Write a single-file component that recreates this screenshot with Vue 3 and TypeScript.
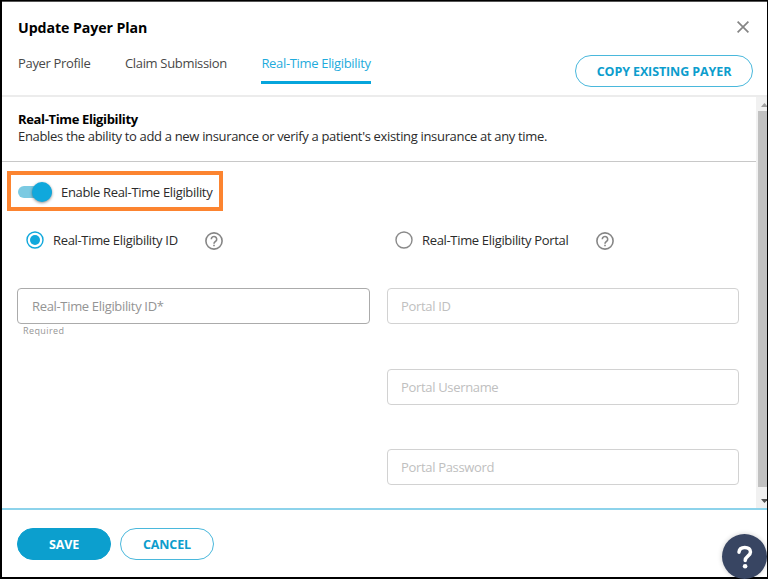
<script setup lang="ts">
import { ref } from 'vue'

const tabs: string[] = ['Payer Profile', 'Claim Submission', 'Real-Time Eligibility']
const activeTab = ref<number>(2)
const enabled = ref<boolean>(true)
const mode = ref<'id' | 'portal'>('id')
const portalFields: string[] = ['Portal ID', 'Portal Username', 'Portal Password']
</script>

<template>
  <div class="dialog">
    <header class="header">
      <div class="title-row">
        <h1 class="title">Update Payer Plan</h1>
        <button class="close" aria-label="Close">
          <svg width="12" height="12" viewBox="0 0 12 12"><path d="M.6 .6 11.4 11.4M11.4 .6 .6 11.4" fill="none" stroke="#858585" stroke-width="1.7" /></svg>
        </button>
      </div>
      <div class="nav-row">
        <nav class="tabs">
          <a v-for="(tab, i) in tabs" :key="tab" class="tab" :class="{ active: i === activeTab }" @click="activeTab = i">{{ tab }}</a>
        </nav>
        <button class="pill copy">COPY EXISTING PAYER</button>
      </div>
    </header>

    <div class="body">
      <main class="content">
        <section class="intro">
          <h2 class="intro-title">Real-Time Eligibility</h2>
          <p class="intro-text">Enables the ability to add a new insurance or verify a patient's existing insurance at any time.</p>
        </section>
        <section class="form">
          <div class="highlight" @click="enabled = !enabled">
            <span class="switch" :class="{ on: enabled }"><span class="knob"></span></span>
            <span class="switch-label">Enable Real-Time Eligibility</span>
          </div>
          <div class="columns">
            <div class="column">
              <div class="option option-id">
                <svg class="radio" :class="{ checked: mode === 'id' }" width="18" height="18" viewBox="0 0 18 18" @click="mode = 'id'"><circle class="ring" cx="9" cy="9" r="8" /><circle v-if="mode === 'id'" class="dot" cx="9" cy="9" r="5" /></svg>
                <span class="option-label">Real-Time Eligibility ID</span>
                <svg class="help" width="18" height="18" viewBox="0 0 18 18"><circle cx="9" cy="9" r="8.1" /><path d="M6.3 7.2a2.7 2.7 0 1 1 4.5 2c-1 .9-1.8 1.2-1.8 2.5" /><path d="M9 12.8v1.5" /></svg>
              </div>
              <div class="field required">Real-Time Eligibility ID*</div>
              <div class="hint">Required</div>
            </div>
            <div class="column">
              <div class="option option-portal">
                <svg class="radio" :class="{ checked: mode === 'portal' }" width="18" height="18" viewBox="0 0 18 18" @click="mode = 'portal'"><circle class="ring" cx="9" cy="9" r="8" /><circle v-if="mode === 'portal'" class="dot" cx="9" cy="9" r="5" /></svg>
                <span class="option-label">Real-Time Eligibility Portal</span>
                <svg class="help" width="18" height="18" viewBox="0 0 18 18"><circle cx="9" cy="9" r="8.1" /><path d="M6.3 7.2a2.7 2.7 0 1 1 4.5 2c-1 .9-1.8 1.2-1.8 2.5" /><path d="M9 12.8v1.5" /></svg>
              </div>
              <div v-for="field in portalFields" :key="field" class="field">{{ field }}</div>
            </div>
          </div>
        </section>
      </main>
      <div class="scrollbar">
        <svg class="arrow-up" width="7" height="4" viewBox="0 0 7 4"><path d="M0 4 3.5 0 7 4z" fill="#a0a0a0" /></svg>
        <div class="thumb"></div>
        <svg class="arrow-down" width="7" height="4" viewBox="0 0 7 4"><path d="M0 0 3.5 4 7 0z" fill="#505050" /></svg>
      </div>
    </div>

    <footer class="footer">
      <button class="pill save">SAVE</button>
      <button class="pill cancel">CANCEL</button>
    </footer>

    <button class="fab" aria-label="Help">
      <svg width="18" height="24" viewBox="0 0 18 24"><path d="M3 7.2C3.3 4.2 5.6 2.4 8.8 2.4c3.5 0 5.7 1.8 5.7 4.6 0 4-5.3 4.2-5.3 8.4" fill="none" stroke="#fff" stroke-width="3.5" stroke-linecap="round" /><circle cx="9.1" cy="21.3" r="2.3" fill="#fff" /></svg>
    </button>
  </div>
</template>

<style>
body {
  margin: 0;
  background: #000;
}
</style>

<style scoped>
.dialog {
  position: relative;
  box-sizing: border-box;
  width: 768px;
  height: 579px;
  padding: 1px 1px 2px 2px;
  display: flex;
  flex-direction: column;
  overflow: hidden;
  background: #000;
  color: #2b2b2b;
  font-family: "Open Sans", sans-serif;
  font-size: 13px;
  letter-spacing: -.33px;
}
h1, h2, p { margin: 0; }
button { font-family: inherit; padding: 0; cursor: pointer; }
.header {
  box-sizing: border-box;
  height: 96px;
  flex: none;
  padding: 0 14px 0 16px;
  border-top: 1px solid #555;
  border-bottom: 2px solid #ececec;
  background: #fff;
}
.title-row {
  display: flex;
  justify-content: space-between;
  height: 50px;
}
.title {
  padding-top: 16px;
  font-size: 14.2px;
  line-height: 20px;
  font-weight: 700;
  letter-spacing: -.08px;
  color: #000;
}
.close {
  width: 12px;
  height: 12px;
  margin: 19px 4px 0 0;
  border: 0;
  background: none;
}
.close svg { display: block; }
.nav-row {
  display: flex;
  justify-content: space-between;
}
.tabs {
  display: flex;
  gap: 34.5px;
}
.tab {
  box-sizing: border-box;
  height: 32px;
  padding-top: 1px;
  line-height: 20px;
  color: #484848;
  white-space: nowrap;
}
.tab.active {
  color: #1fabdc;
  border-bottom: 3px solid #06a5dc;
}
.pill {
  box-sizing: border-box;
  height: 32px;
  border: 1px solid #4ab8dc;
  border-radius: 16px;
  background: #fff;
  color: #0c9dcd;
  font-size: 12.5px;
  font-weight: 700;
  letter-spacing: -.1px;
}
.copy {
  width: 178px;
  height: 32px;
  margin-top: 3px;
  padding-top: 1px;
}
.body {
  display: flex;
  height: 411px;
  flex: none;
  background: #fff;
}
.content { width: 754px; }
.intro {
  box-sizing: border-box;
  height: 65px;
  padding: 14px 16px 0;
  border-bottom: 1px solid #c8c8c8;
}
.intro-title {
  font-size: 13px;
  line-height: 17px;
  font-weight: 700;
  letter-spacing: -.36px;
  color: #000;
}
.intro-text { line-height: 17px; white-space: nowrap; }
.form { padding: 9px 17px 0 5px; }
.highlight {
  box-sizing: border-box;
  display: flex;
  align-items: center;
  width: 216px;
  height: 40px;
  padding-left: 7px;
  border: 4px solid #fc8430;
}
.switch {
  display: flex;
  align-items: center;
  flex: none;
  width: 34px;
  height: 12px;
  margin-top: 2px;
  border-radius: 6px;
  background: #bbb;
}
.switch.on {
  justify-content: flex-end;
  background: #7bcae2;
}
.knob {
  width: 20px;
  height: 20px;
  border-radius: 50%;
  background: #10a8dc;
  box-shadow: 0 1px 3px rgba(0, 0, 0, .45);
}
.switch-label {
  margin-left: 9px;
  padding-top: 1px;
  white-space: nowrap;
}
.columns {
  display: grid;
  grid-template-columns: 353px 352px;
  gap: 17px;
  padding-left: 10px;
}
.option {
  display: flex;
  align-items: center;
  height: 57px;
  margin-bottom: 20px;
}
.option-id { padding-left: 9.3px; }
.option-portal { padding-left: 8.3px; }
.radio .ring {
  fill: none;
  stroke: #8a8a8a;
  stroke-width: 1.4;
}
.radio.checked .ring { stroke: #10a8dc; }
.radio .dot { fill: #10a8dc; }
.option-label { margin-left: 8.7px; }
.help {
  margin: 3px 0 0 27.7px;
  fill: none;
  stroke: #868686;
  stroke-width: 1.6;
}
.field {
  box-sizing: border-box;
  height: 36px;
  margin-bottom: 44.6px;
  padding-left: 13px;
  border: 1px solid #d2d2d2;
  border-radius: 4px;
  line-height: 34px;
  color: #c0c0c0;
}
.field.required {
  margin-bottom: 0;
  padding-left: 14px;
  border-color: #ababab;
  color: #949494;
}
.hint {
  padding-left: 6px;
  font-size: 9px;
  line-height: 13px;
  letter-spacing: .4px;
  color: #969696;
}
.scrollbar {
  display: flex;
  flex-direction: column;
  align-items: flex-end;
  width: 11px;
  overflow: hidden;
  background: #f1f1f1;
}
.arrow-up { margin: 6px -1px 4px 0; flex: none; }
.thumb {
  width: 9px;
  height: 376px;
  flex: none;
  background: #c1c1c1;
}
.arrow-down { margin: 12px -1px 0 0; flex: none; }
.footer {
  display: flex;
  flex: 1;
  gap: 9px;
  padding: 18px 0 0 15px;
  border-top: 2px solid #8dd3eb;
  background: #fff;
}
.save {
  width: 94px;
  background: #0c9fce;
  border-color: #0c9fce;
  color: #fff;
}
.cancel { width: 94px; }
.footer .pill { padding-top: 1px; }
.fab {
  position: absolute;
  left: 722px;
  top: 534px;
  width: 45px;
  height: 45px;
  display: flex;
  align-items: center;
  justify-content: center;
  border: 0;
  border-radius: 50%;
  background: #384562;
  box-shadow: 0 0 5px rgba(0, 0, 0, .2);
}
</style>
